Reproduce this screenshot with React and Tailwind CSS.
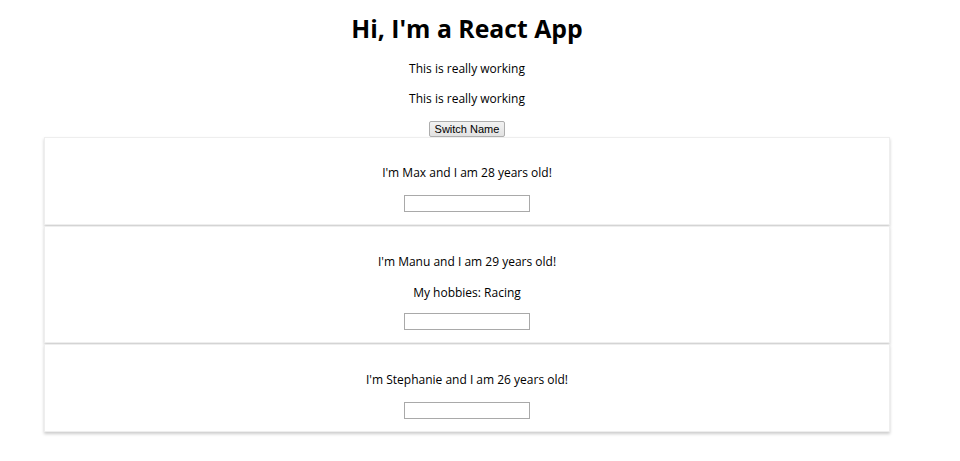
const persons = [
  { name: "Max", age: 28 },
  { name: "Manu", age: 29, hobbies: "Racing" },
  { name: "Stephanie", age: 26 },
]

function Person({ name, age, hobbies }) {
  return (
    <div className="mx-auto w-[846px] border border-[#eee] bg-white px-[13px] pt-[13px] pb-[12px] text-center shadow-[0_2px_3px_#ccc]">
      <p className="my-[13px] h-[18px] leading-[18px]">
        I'm {name} and I am {age} years old!
      </p>
      {hobbies && <p className="mb-[11px] h-[18px] leading-[18px]">My hobbies: {hobbies}</p>}
      <input
        type="text"
        className="mx-auto block h-[17px] w-[126px] border border-[#a9a9a9] bg-white"
      />
    </div>
  )
}

export default function App() {
  return (
    <div
      className="w-[934px] bg-white pb-[29px] text-center text-[12px] text-black"
      style={{ fontFamily: "'Open Sans', sans-serif" }}
    >
      <h1 className="pt-[11px] text-[24.8px] leading-[34px] font-bold">Hi, I'm a React App</h1>
      <p className="mt-[15px] leading-[18px]">This is really working</p>
      <p className="mt-[12px] leading-[18px]">This is really working</p>
      <button
        className="mx-auto mt-[13px] block h-[16px] w-[76px] rounded-[2px] border border-[#adadad] bg-[linear-gradient(#f2f2f2,#e2e2e2)] text-[11px] leading-[14px]"
        style={{ fontFamily: "'Liberation Sans', Arial, sans-serif" }}
      >
        Switch Name
      </button>
      <div className="flex flex-col gap-[1px]">
        {persons.map((p) => (
          <Person key={p.name} {...p} />
        ))}
      </div>
    </div>
  )
}
